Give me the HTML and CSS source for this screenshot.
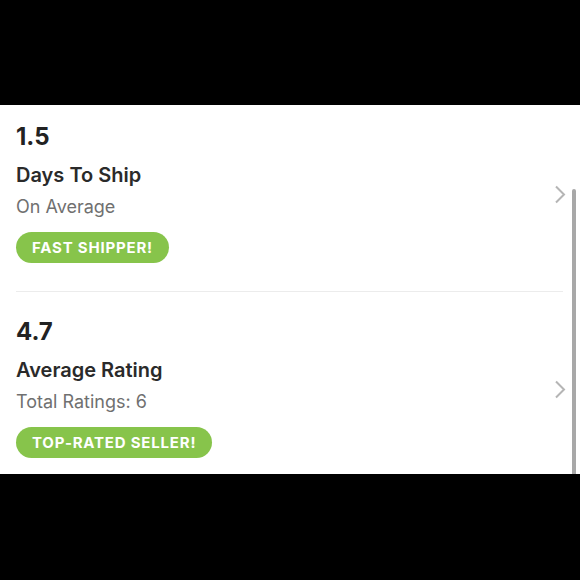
FILE: index.html
```html
<!DOCTYPE html>
<html>
<head>
<meta charset="utf-8">
<link rel="stylesheet" href="styles.css">
</head>
<body>
<div class="screen">
  <div class="bar-top"></div>
  <div class="panel">
    <div class="list">
      <div class="section">
        <div class="info">
          <div class="value">1.5</div>
          <div class="title">Days To Ship</div>
          <div class="sub">On Average</div>
          <div class="badge">FAST SHIPPER!</div>
        </div>
        <svg class="chev" width="12" height="19" viewBox="0 0 12 19"><path d="M2 1.5 L10 9.5 L2 17.5" fill="none" stroke="#b5b5b5" stroke-width="2"/></svg>
      </div>
      <div class="section">
        <div class="info">
          <div class="value">4.7</div>
          <div class="title">Average Rating</div>
          <div class="sub">Total Ratings: 6</div>
          <div class="badge">TOP-RATED SELLER!</div>
        </div>
        <svg class="chev" width="12" height="19" viewBox="0 0 12 19"><path d="M2 1.5 L10 9.5 L2 17.5" fill="none" stroke="#b5b5b5" stroke-width="2"/></svg>
      </div>
    </div>
    <div class="scrollbar"></div>
  </div>
</div>
</body>
</html>
```
FILE: styles.css
```css
html, body {
  margin: 0;
  padding: 0;
  background: #000;
}
.screen {
  width: 580px;
  height: 580px;
  background: #000;
  font-family: Inter, "Noto Sans", sans-serif;
}
.bar-top {
  height: 105px;
}
.panel {
  position: relative;
  height: 369px;
  background: #fff;
  overflow: hidden;
}
.list {
  margin-top: -8px;
}
.section {
  display: flex;
  align-items: center;
  margin: 0 17px 0 16px;
  padding: 25px 0 28px;
  border-bottom: 1px solid #ececec;
}
.info {
  flex: 1;
}
.value {
  font-size: 24px;
  font-weight: 700;
  line-height: 30px;
  color: #222;
}
.title {
  margin-top: 10px;
  font-size: 20px;
  font-weight: 600;
  line-height: 26px;
  color: #2a2a2a;
}
.sub {
  margin-top: 7px;
  font-size: 18px;
  line-height: 24px;
  color: #707070;
}
.badge {
  display: inline-block;
  margin-top: 13px;
  height: 31px;
  line-height: 31px;
  padding: 0 16px;
  border-radius: 16px;
  background: #87c44b;
  color: #fff;
  font-size: 15px;
  font-weight: 700;
  letter-spacing: 0.8px;
}
.chev {
  margin-right: -3px;
  margin-top: 4px;
}
.scrollbar {
  position: absolute;
  left: 572px;
  top: 84px;
  width: 4px;
  height: 300px;
  background: #a8a8a8;
  border-radius: 2px;
}
```
